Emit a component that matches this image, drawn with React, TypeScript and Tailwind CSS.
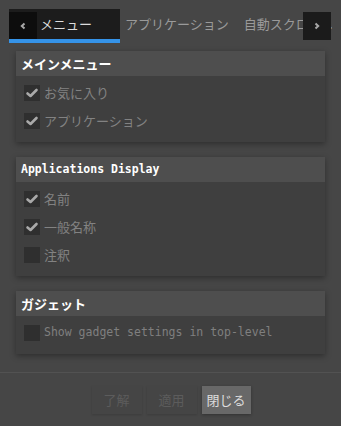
const jp = "font-['Noto_Sans_CJK_JP',sans-serif]";
const mono = "font-['DejaVu_Sans_Mono','Noto_Sans_CJK_JP',monospace]";

function CheckBox({ checked }: { checked?: boolean }) {
  return (
    <span className="flex h-4 w-4 shrink-0 items-center justify-center bg-[#2f2f2f]">
      {checked && (
        <svg width="16" height="16" viewBox="0 0 16 16">
          <path d="M3.5 8.5 L6.5 11 L12.5 5" fill="none" stroke="#a9a9a9" strokeWidth="2.6" strokeLinecap="round" strokeLinejoin="round" />
        </svg>
      )}
    </span>
  );
}

function Row({ label, checked, en }: { label: string; checked?: boolean; en?: boolean }) {
  return (
    <div className="flex h-4 items-center gap-[4px] pl-[8px]">
      <CheckBox checked={checked} />
      <span className={en ? `${mono} text-[11.5px] text-[#7f7f7f]` : `${jp} text-[13px] text-[#828282]`}>{label}</span>
    </div>
  );
}

function Group({ title, en, children }: { title: string; en?: boolean; children: React.ReactNode }) {
  return (
    <section className="mx-[16px] bg-[#3f3f3f] shadow-[0_2px_6px_rgba(0,0,0,0.35)]">
      <h2
        className={`flex h-[25px] items-center bg-[#4e4e4e] pl-[5px] font-bold text-white ${
          en ? `${mono} text-[11.5px]` : `${jp} text-[13px]`
        }`}
      >
        {title}
      </h2>
      <div className="flex flex-col gap-[12px] pt-[9px] pb-[13px]">{children}</div>
    </section>
  );
}

export default function App() {
  return (
    <div className={`flex h-[426px] w-[341px] flex-col bg-[#464646] ${jp}`}>
      <div className="relative mx-[9px] mt-[9px] h-[34px] overflow-hidden">
        <div className="flex h-full whitespace-nowrap text-[13px]">
          <div className="flex h-full w-[111px] shrink-0 flex-col bg-[#1c1c1c]">
            <span className="flex flex-1 items-center pl-[31px] text-[#dcdcdc]">メニュー</span>
            <span className="h-[4px] bg-[#3593e8]" />
          </div>
          <span className="flex h-[30px] shrink-0 items-center pl-[5px] pr-[7px] text-[#9a9a9a]">アプリケーション</span>
          <span className="flex h-[30px] shrink-0 items-center pl-[8px] text-[#9a9a9a]">自動スクロール</span>
        </div>
        <button className="absolute left-0 top-[3px] flex h-[27px] w-[28px] items-center justify-center bg-[#0d0d0d]">
          <svg width="8" height="10" viewBox="0 0 8 10">
            <path d="M5.5 2.5 L2.8 5 L5.5 7.5" fill="none" stroke="#a8a8a8" strokeWidth="2" />
          </svg>
        </button>
        <button className="absolute left-[294px] top-[3px] flex h-[28px] w-[28px] items-center justify-center bg-[#1b1b1b]">
          <svg width="8" height="10" viewBox="0 0 8 10">
            <path d="M2.5 2.5 L5.2 5 L2.5 7.5" fill="none" stroke="#a8a8a8" strokeWidth="2" />
          </svg>
        </button>
      </div>

      <div className="mt-[8px] flex flex-col gap-[15px]">
        <Group title="メインメニュー">
          <Row label="お気に入り" checked />
          <Row label="アプリケーション" checked />
        </Group>
        <Group title="Applications Display" en>
          <Row label="名前" checked />
          <Row label="一般名称" checked />
          <Row label="注釈" />
        </Group>
        <Group title="ガジェット">
          <Row label="Show gadget settings in top-level" en />
        </Group>
      </div>

      <div className="mt-[18px] flex flex-1 items-center justify-center gap-[5px] border-t border-[#525252] pl-[1px] text-[13px]">
        <button className="h-[28px] w-[50px] bg-[#454545] text-[#5c5c5c] shadow-[0_1px_2px_rgba(0,0,0,0.15)]">了解</button>
        <button className="h-[28px] w-[50px] bg-[#454545] text-[#5c5c5c] shadow-[0_1px_2px_rgba(0,0,0,0.15)]">適用</button>
        <button className="h-[28px] w-[49px] bg-[#686868] text-[#dddddd] shadow-[0_1px_3px_rgba(0,0,0,0.3)]">閉じる</button>
      </div>
    </div>
  );
}
